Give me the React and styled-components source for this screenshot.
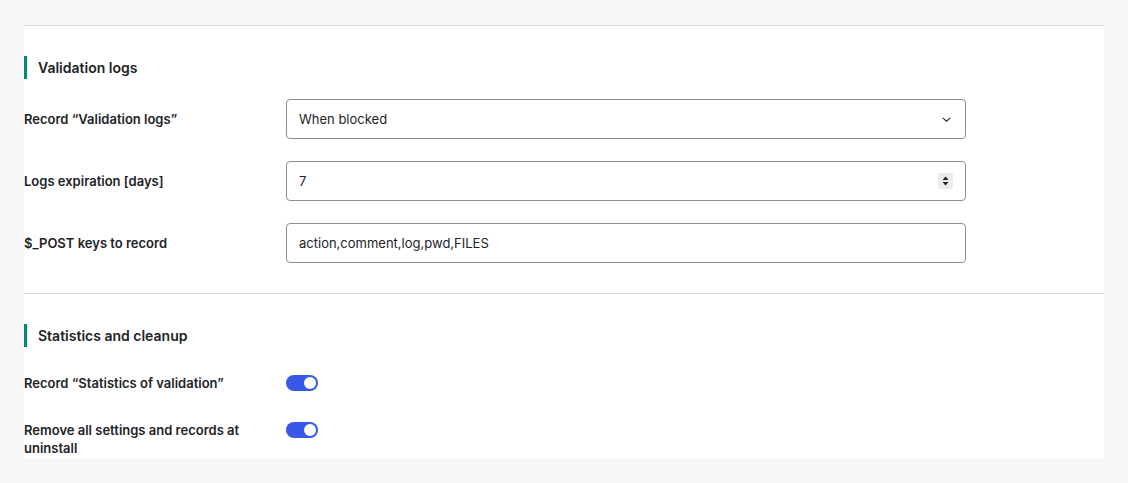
import React from "react";
import styled, { createGlobalStyle } from "styled-components";

const Global = createGlobalStyle`
  html, body {
    margin: 0;
    padding: 0;
    background: #f5f6f5;
  }
  body {
    font-family: Inter, "Noto Sans", "Liberation Sans", sans-serif;
    color: #1d2327;
    -webkit-font-smoothing: antialiased;
  }
`;

const Page = styled.div`
  padding: 25px 24px 24px 24px;
  height: 483px;
  box-sizing: border-box;
`;

const Panel = styled.div`
  background: #fff;
  border-top: 1px solid #dcdcde;
`;

const Section = styled.section`
  padding: 30px 0 ${(p) => p.$bottom || 0}px 0;
  border-top: ${(p) => (p.$divided ? "1px solid #dcdcde" : "none")};
`;

const Heading = styled.h2`
  margin: 0 0 ${(p) => p.$gap || 20}px 0;
  border-left: 3px solid #008a6e;
  padding-left: 11px;
  height: 23px;
  display: flex;
  align-items: center;
  font-size: 14px;
  font-weight: 600;
  color: #1d2327;
`;

const Rows = styled.div`
  display: flex;
  flex-direction: column;
  gap: ${(p) => p.$gap}px;
`;

const Row = styled.div`
  display: flex;
  align-items: ${(p) => (p.$top ? "flex-start" : "center")};
`;

const Label = styled.div`
  width: 262px;
  flex: none;
  padding-right: 22px;
  box-sizing: border-box;
  font-size: 13px;
  font-weight: 600;
  line-height: 18px;
  color: #1d2327;
`;

const Field = styled.div`
  width: 680px;
  height: 40px;
  box-sizing: border-box;
  border: 1px solid #8c8f94;
  border-radius: 4px;
  display: flex;
  align-items: center;
  padding: 0 12px 0 12px;
  background: #fff;
`;

const FieldInput = styled.input`
  flex: 1;
  border: none;
  outline: none;
  padding: 0;
  background: transparent;
  font-family: inherit;
  font-size: 13px;
  color: #1d2327;
`;

const Spinner = styled.div`
  width: 15px;
  height: 16px;
  background: #ececec;
  display: flex;
  align-items: center;
  justify-content: center;
`;

const Toggle = styled.div`
  width: 32px;
  height: 16px;
  border-radius: 8px;
  background: #3858e9;
  display: flex;
  align-items: center;
  justify-content: ${(p) => (p.$on ? "flex-end" : "flex-start")};
  padding: 0 2px;
  box-sizing: border-box;
  margin-top: 1px;
`;

const Knob = styled.span`
  width: 12px;
  height: 12px;
  border-radius: 50%;
  background: #fff;
`;

const Chevron = () => (
  <svg width="9" height="5" viewBox="0 0 9 5" fill="none" style={{ marginRight: 2 }}>
    <path d="M0.8 0.8l3.7 3.4 3.7-3.4" stroke="#1d2327" strokeWidth="1.1" />
  </svg>
);

const Arrows = () => (
  <svg width="7" height="10" viewBox="0 0 7 10">
    <path d="M3.5 0.5L6.5 4H0.5z" fill="#1d2327" />
    <path d="M3.5 9.5L6.5 6H0.5z" fill="#1d2327" />
  </svg>
);

const App = () => {
  return (
    <Page>
      <Global />
      <Panel>
        <Section $bottom={30}>
          <Heading>Validation logs</Heading>
          <Rows $gap={22}>
            <Row>
              <Label>Record “Validation logs”</Label>
              <Field>
                <FieldInput readOnly value="When blocked" />
                <Chevron />
              </Field>
            </Row>
            <Row>
              <Label>Logs expiration [days]</Label>
              <Field>
                <FieldInput readOnly value="7" />
                <Spinner>
                  <Arrows />
                </Spinner>
              </Field>
            </Row>
            <Row>
              <Label>$_POST keys to record</Label>
              <Field>
                <FieldInput readOnly value="action,comment,log,pwd,FILES" />
              </Field>
            </Row>
          </Rows>
        </Section>
        <Section $divided $bottom={2}>
          <Heading $gap={27}>Statistics and cleanup</Heading>
          <Rows $gap={29}>
            <Row $top>
              <Label>Record “Statistics of validation”</Label>
              <Toggle $on>
                <Knob />
              </Toggle>
            </Row>
            <Row $top>
              <Label>Remove all settings and records at uninstall</Label>
              <Toggle $on>
                <Knob />
              </Toggle>
            </Row>
          </Rows>
        </Section>
      </Panel>
    </Page>
  );
};

export default App;
